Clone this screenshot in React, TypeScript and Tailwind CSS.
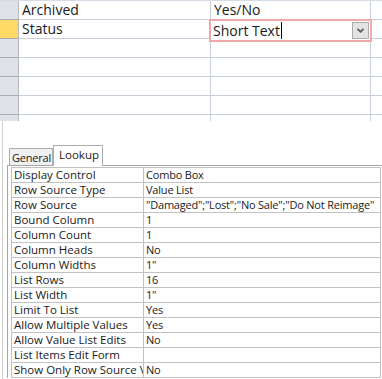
import React from "react";

const props: [string, string][] = [
  ["Display Control", "Combo Box"],
  ["Row Source Type", "Value List"],
  ["Row Source", "\"Damaged\";\"Lost\";\"No Sale\";\"Do Not Reimage\""],
  ["Bound Column", "1"],
  ["Column Count", "1"],
  ["Column Heads", "No"],
  ["Column Widths", "1\""],
  ["List Rows", "16"],
  ["List Width", "1\""],
  ["Limit To List", "Yes"],
  ["Allow Multiple Values", "Yes"],
  ["Allow Value List Edits", "No"],
  ["List Items Edit Form", ""],
  ["Show Only Row Source Values", "No"],
];

function FieldRow({ name, type, active }: { name?: string; type?: string; active?: boolean }) {
  return (
    <div className="flex h-[19px]">
      <div
        className={`w-[19px] shrink-0 border-r border-b border-r-[#b4b9c0] border-b-[#a9adb3] ${
          active ? "bg-[#ffd966]" : "bg-[#dee1e5]"
        }`}
      />
      <div className="w-[192px] shrink-0 border-r border-b border-[#c9d0dc] pl-[3px] text-[14px] leading-[18px]">
        {name}
      </div>
      <div className="relative w-[160px] shrink-0 border-r border-b border-[#c9d0dc] pl-[3px] text-[14px] leading-[18px]">
        {active ? (
          <div className="absolute left-[-2px] top-[-1px] w-[163px] h-[23px] border-2 border-[#f2a7ab] bg-white z-10 flex items-center pl-[2px]">
            <span>Short Text</span>
            <span className="w-px h-[17px] bg-black ml-[1px]" />
            <div className="ml-auto mr-[1px] w-[17px] h-[17px] bg-[#e3e3e3] border border-[#acacac] flex items-center justify-center">
              <svg width="7" height="5" viewBox="0 0 7 5">
                <path d="M0.5 0.8 L3.5 3.8 L6.5 0.8" fill="none" stroke="#555" strokeWidth="1.6" />
              </svg>
            </div>
          </div>
        ) : (
          type
        )}
      </div>
      <div className="flex-1 border-b border-[#c9d0dc]" />
    </div>
  );
}

export default function App() {
  return (
    <div className="w-[382px] h-[379px] bg-white overflow-hidden text-[#1a1a1a] font-['Open_Sans','Noto_Sans',sans-serif]">
      <div className="border-t border-[#d6dce5]">
        <FieldRow name="Archived" type="Yes/No" />
        <FieldRow name="Status" active />
        <FieldRow />
        <FieldRow />
        <FieldRow />
        <FieldRow />
        <div className="flex h-[6px]">
          <div className="w-[19px] shrink-0 border-r border-[#b4b9c0] bg-[#dee1e5]" />
          <div className="w-[192px] shrink-0 border-r border-[#c9d0dc]" />
          <div className="w-[160px] shrink-0 border-r border-[#c9d0dc]" />
        </div>
      </div>

      <div className="h-[258px] ml-[2px] border-l border-[#cfcfcf] pt-[24px]">
        <div className="ml-[4px]">
          <div className="flex items-end h-[20px] pl-[2px] text-[11px]">
            <div className="h-[17px] w-[44px] border border-b-0 border-[#adadad] bg-[#f0f0f0] pl-[2px] leading-[17px] whitespace-nowrap overflow-hidden tracking-[-0.2px]">
              General
            </div>
            <div className="relative z-10 -mb-px h-[21px] w-[50px] border border-b-0 border-[#adadad] bg-white pl-[5px] leading-[17px] text-[11.5px]">
              Lookup
            </div>
          </div>
          <div className="border-t border-l border-[#a6a6a6] pt-px pl-[3px]">
            <div className="w-[370px] border-t border-l border-r border-[#c2c2c2]">
              {props.map(([k, v]) => (
                <div key={k} className="flex h-[15px] border-b border-[#c2c2c2] leading-[14px]">
                  <div className="w-[132px] shrink-0 border-r border-[#c2c2c2] pl-[2px] whitespace-nowrap overflow-hidden text-[11.5px]">
                    {k}
                  </div>
                  <div className="flex-1 pl-[2px] whitespace-nowrap overflow-hidden text-[11px] tracking-[-0.2px]">{v}</div>
                </div>
              ))}
            </div>
          </div>
        </div>
      </div>
    </div>
  );
}
